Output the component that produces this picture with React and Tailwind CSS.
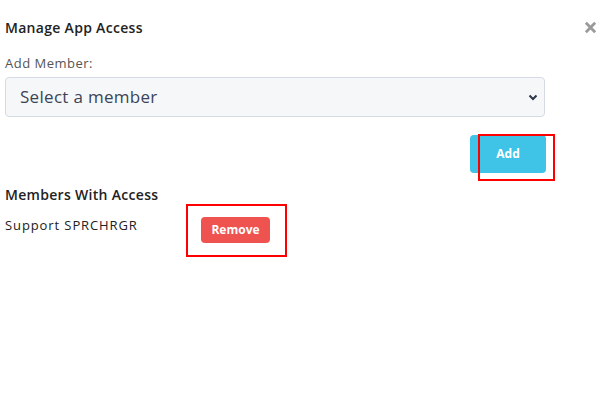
export default function App() {
  return (
    <div className="relative w-[615px] h-[411px] bg-white text-[#1a1a1a]" style={{ fontFamily: '"Open Sans", "DejaVu Sans", sans-serif' }}>
      <div className="px-[5px] pt-[18px]">
        <div className="flex items-start justify-between">
          <h2 className="text-[14px] font-semibold leading-[20px] tracking-[0.3px] text-[#222]">Manage App Access</h2>
          <button className="mr-[13px] mt-[3px] text-[#9a9a9a]">
            <svg width="13" height="13" viewBox="0 0 14 14">
              <path d="M2 2 L12 12 M12 2 L2 12" stroke="currentColor" strokeWidth="3" strokeLinecap="butt" />
            </svg>
          </button>
        </div>

        <label className="mt-[17px] block text-[13px] leading-[16px] tracking-[0.5px] text-[#555]">Add Member:</label>
        <div className="relative mt-[6px] w-[540px]">
          <select className="h-[40px] w-full appearance-none rounded-[4px] border border-[#d5dbe3] bg-[#f6f7f9] pl-[14px] text-[17px] tracking-[0.3px] text-[#3b4457] outline-none">
            <option>Select a member</option>
          </select>
          <svg className="pointer-events-none absolute right-[7px] top-[17px]" width="10" height="7" viewBox="0 0 10 7">
            <path d="M1.5 1.5 L5 5 L8.5 1.5" fill="none" stroke="#2d3748" strokeWidth="2" />
          </svg>
        </div>

        <div className="mt-[18px] flex w-[541px] justify-end">
          <button className="h-[38px] w-[76px] rounded-[4px] bg-[#3fc3e6] text-[12px] font-bold text-white">Add</button>
        </div>

        <h3 className="mt-[12px] text-[14px] font-semibold leading-[20px] tracking-[0.3px] text-[#222]">Members With Access</h3>
        <div className="mt-[10px] flex items-start">
          <span className="mt-[1px] w-[196px] text-[13px] leading-[18px] tracking-[0.9px] text-[#222]">Support SPRCHRGR</span>
          <button className="mt-[2px] h-[26px] w-[69px] rounded-[4px] bg-[#ee5350] text-[12px] font-bold text-white">Remove</button>
        </div>
      </div>

      <div className="pointer-events-none absolute left-[478px] top-[134px] h-[47px] w-[77px] border-2 border-[#ff0000]" />
      <div className="pointer-events-none absolute left-[186px] top-[204px] h-[53px] w-[101px] border-2 border-[#ff0000]" />
    </div>
  );
}
